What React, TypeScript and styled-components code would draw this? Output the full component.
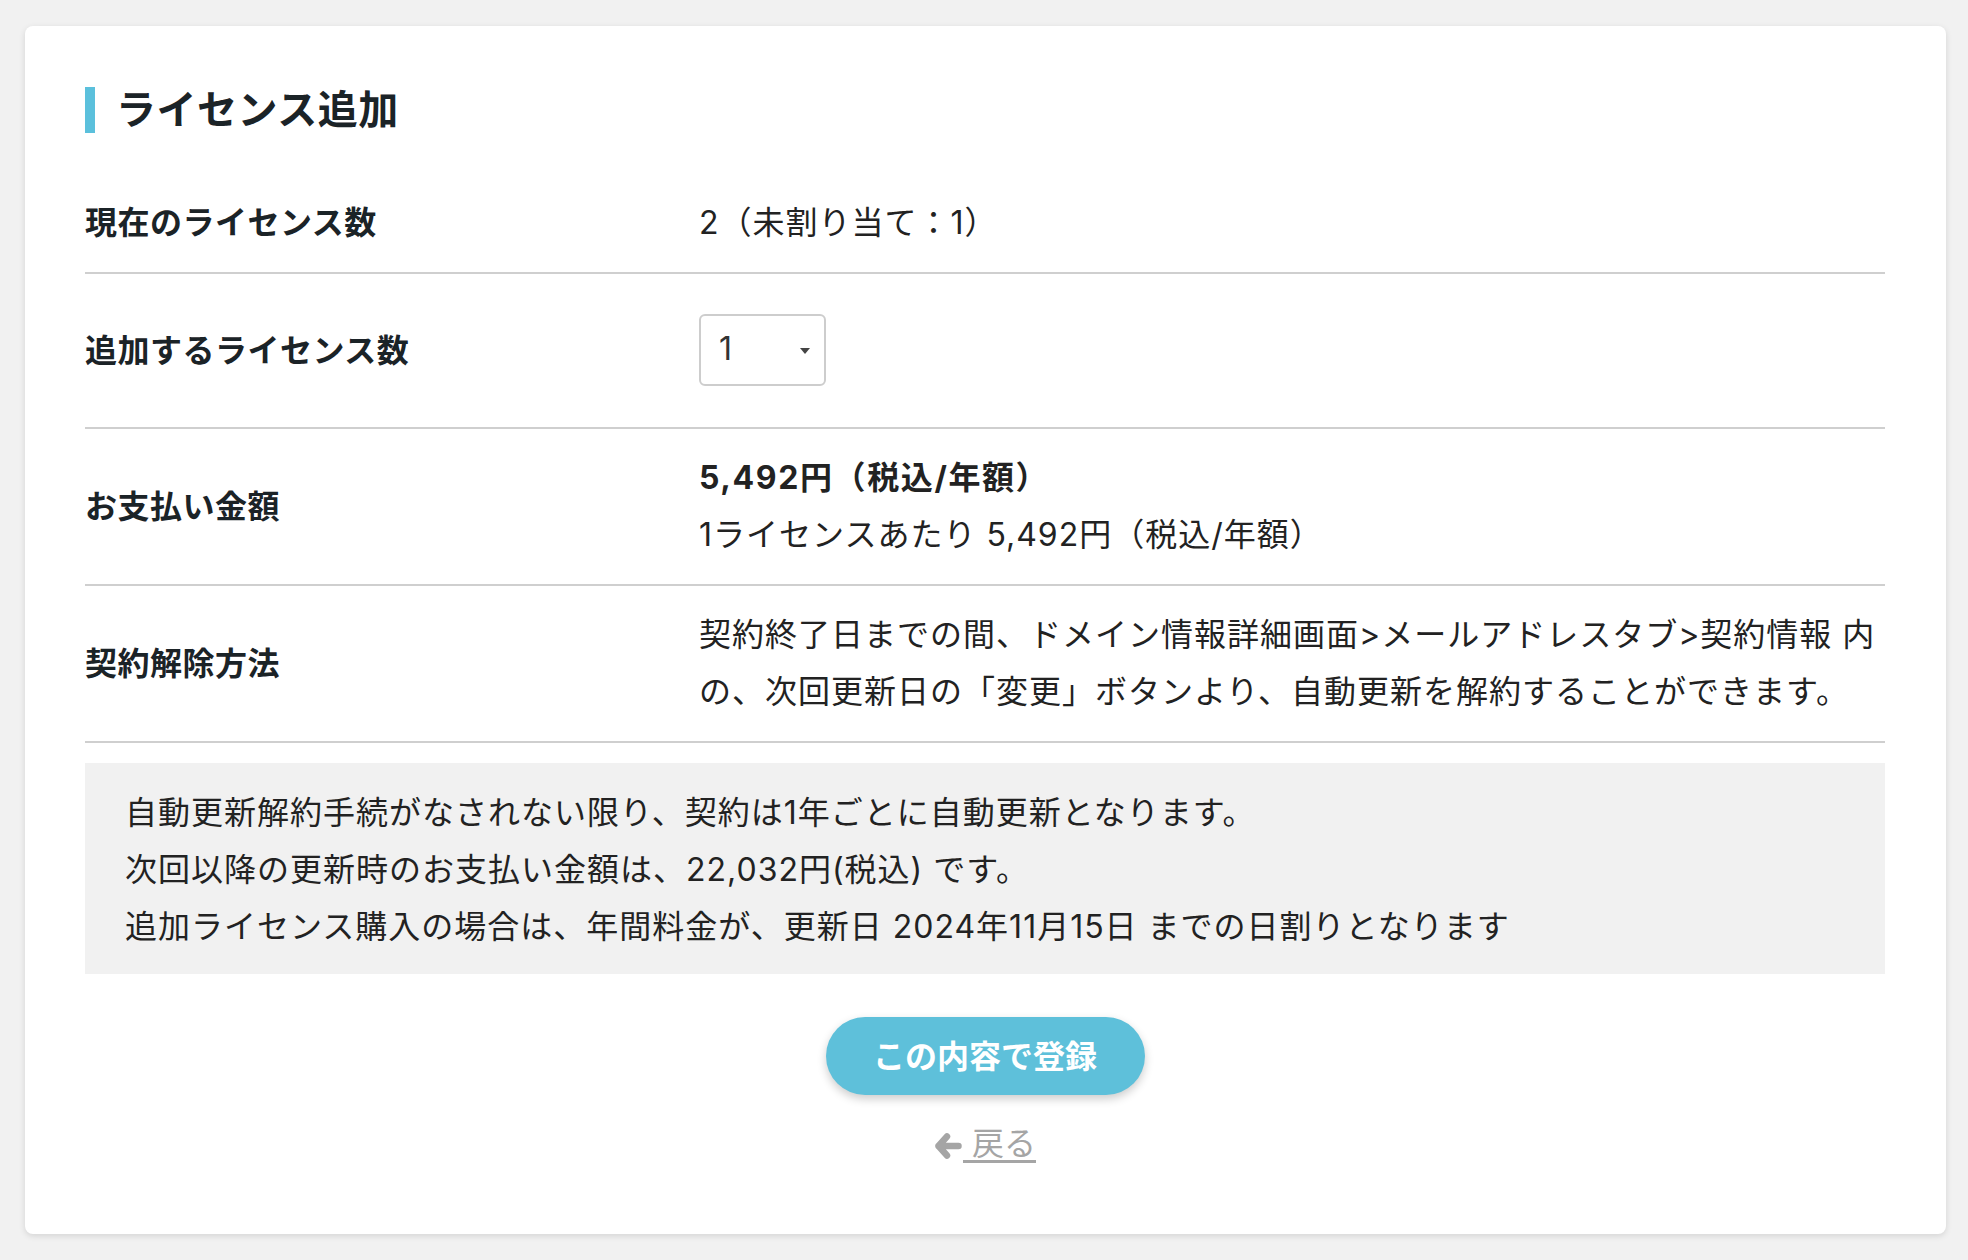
import React from 'react'
import styled, { createGlobalStyle } from 'styled-components'

const GlobalStyle = createGlobalStyle`
  html, body {
    margin: 0;
    padding: 0;
    background-color: #f1f1f1;
  }

  body {
    font-family: Inter, 'Noto Sans CJK JP', sans-serif;
    color: #1b2327;
  }
`

const StyledPage = styled.div`
  padding: 26px 22px 26px 25px;
`

const StyledCard = styled.div`
  background-color: #fff;
  border-radius: 8px;
  box-shadow: 0 2px 6px rgba(0, 0, 0, 0.12);
  padding: 61px 61px 60px 60px;
`

const StyledTitle = styled.h2`
  margin: 0 0 41px;
  border-left: 10px solid #5bc0dc;
  padding-left: 21px;
  font-size: 40px;
  line-height: 46px;
  font-weight: 700;
  letter-spacing: 0.5px;
`

const StyledRow = styled.div`
  display: grid;
  grid-template-columns: 614px 1fr;
  align-items: center;
  padding: 20px 0 21px;
  border-bottom: 2px solid #cfcfcf;
  font-size: 32px;
  line-height: 57px;
`

const StyledLabel = styled.div`
  font-weight: 700;
  letter-spacing: 0.5px;
`

const StyledValue = styled.div<{ $bold?: boolean }>`
  font-weight: ${(p) => (p.$bold ? 700 : 400)};
  letter-spacing: ${(p) => (p.$bold ? '1.6px' : '1px')};
  color: #222;
`

const StyledSelect = styled.div`
  position: relative;
  box-sizing: border-box;
  width: 127px;
  height: 72px;
  margin: 20px 0;
  border: 2px solid #cdcdcd;
  border-radius: 6px;
  padding-left: 18px;
  font-size: 32px;
  line-height: 66px;
  color: #333;

  &::after {
    content: '';
    position: absolute;
    right: 14px;
    top: 32px;
    border-left: 5px solid transparent;
    border-right: 5px solid transparent;
    border-top: 6px solid #444;
  }
`

const StyledNote = styled.div`
  margin-top: 20px;
  background-color: #f1f1f1;
  padding: 21px 40px 19px;
  font-size: 32px;
  line-height: 57px;
  letter-spacing: 1px;
  color: #222;
`

const StyledActions = styled.div`
  display: flex;
  flex-direction: column;
  align-items: center;
  margin-top: 43px;
`

const StyledSubmit = styled.button`
  box-sizing: border-box;
  width: 319px;
  height: 78px;
  padding: 0 0 5px;
  border: none;
  border-radius: 39px;
  background-color: #5ec0da;
  box-shadow: 0 4px 10px rgba(0, 0, 0, 0.2);
  color: #fff;
  font-family: inherit;
  font-size: 32px;
  font-weight: 700;
  cursor: pointer;
`

const StyledBack = styled.a`
  display: flex;
  align-items: center;
  margin-top: 20px;
  padding-bottom: 2px;
  font-size: 32px;
  line-height: 57px;
  color: #a5a5a5;
  text-decoration: none;
  cursor: pointer;

  svg {
    width: 28px;
    height: 28px;
    margin-top: 4px;
    flex-shrink: 0;
  }

  span {
    text-decoration: underline;
    text-underline-offset: 5px;
    white-space: pre;
    padding-left: 1px;
  }
`

const BackArrow = () => (
  <svg viewBox='0 0 28 28' fill='none'>
    <path
      d='M13 4.5 L4.5 14 L13 23.5 M4.5 14 H24.5'
      stroke='currentColor'
      strokeWidth='6.5'
      strokeLinecap='round'
      strokeLinejoin='round'
    />
  </svg>
)

const App = () => {
  return (
    <StyledPage>
      <GlobalStyle />
      <StyledCard>
        <StyledTitle>ライセンス追加</StyledTitle>

        <StyledRow>
          <StyledLabel>現在のライセンス数</StyledLabel>
          <StyledValue>2（未割り当て：1）</StyledValue>
        </StyledRow>

        <StyledRow>
          <StyledLabel>追加するライセンス数</StyledLabel>
          <div>
            <StyledSelect>1</StyledSelect>
          </div>
        </StyledRow>

        <StyledRow>
          <StyledLabel>お支払い金額</StyledLabel>
          <div>
            <StyledValue $bold>5,492円（税込/年額）</StyledValue>
            <StyledValue>1ライセンスあたり 5,492円（税込/年額）</StyledValue>
          </div>
        </StyledRow>

        <StyledRow>
          <StyledLabel>契約解除方法</StyledLabel>
          <StyledValue>
            契約終了日までの間、ドメイン情報詳細画面&gt;メールアドレスタブ&gt;契約情報 内
            <br />
            の、次回更新日の「変更」ボタンより、自動更新を解約することができます。
          </StyledValue>
        </StyledRow>

        <StyledNote>
          <div>自動更新解約手続がなされない限り、契約は1年ごとに自動更新となります。</div>
          <div>次回以降の更新時のお支払い金額は、22,032円(税込) です。</div>
          <div>追加ライセンス購入の場合は、年間料金が、更新日 2024年11月15日 までの日割りとなります</div>
        </StyledNote>

        <StyledActions>
          <StyledSubmit type='button'>この内容で登録</StyledSubmit>
          <StyledBack>
            <BackArrow />
            <span> 戻る</span>
          </StyledBack>
        </StyledActions>
      </StyledCard>
    </StyledPage>
  )
}

export default App
